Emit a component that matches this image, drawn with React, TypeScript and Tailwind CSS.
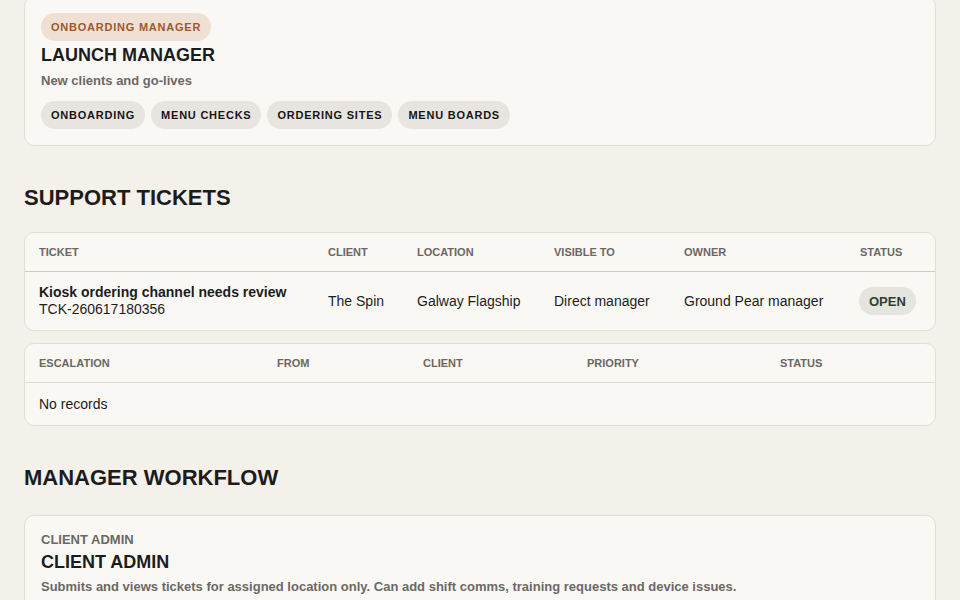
const chips = ["ONBOARDING", "MENU CHECKS", "ORDERING SITES", "MENU BOARDS"];

const ticketCols = ["TICKET", "CLIENT", "LOCATION", "VISIBLE TO", "OWNER", "STATUS"];
const escalationCols = ["ESCALATION", "FROM", "CLIENT", "PRIORITY", "STATUS"];

const Card = ({ children, className = "" }: { children: React.ReactNode; className?: string }) => (
  <div className={`rounded-[10px] border border-[#e2ded7] bg-[#faf8f5] ${className}`}>{children}</div>
);

const HeadCell = ({ label }: { label: string }) => (
  <div className="pl-[14px] text-[11px] font-bold uppercase leading-[14px] text-[#6b6762]">{label}</div>
);

export default function App() {
  return (
    <div className="min-h-screen bg-[#f4f0ea] px-6 pb-10 font-['Liberation_Sans',Arial,sans-serif] text-[#1c1c1c]">
      {/* role card, partly scrolled off the top */}
      <Card className="-mt-[4px] px-4 pb-4 pt-[16px]">
        <span className="inline-flex h-[28px] items-center rounded-full bg-[#f0e0d3] px-[10px] text-[11px] font-bold tracking-[0.07em] text-[#9a5a2f]">
          ONBOARDING MANAGER
        </span>
        <h3 className="mt-[3px] text-[18px] font-bold leading-[22px]">LAUNCH MANAGER</h3>
        <p className="mt-[7px] text-[13px] font-bold leading-[16px] text-[#6b6864]">New clients and go-lives</p>
        <div className="mt-[12px] flex gap-[6px]">
          {chips.map((c) => (
            <span
              key={c}
              className="inline-flex h-[28px] items-center rounded-full bg-[#e8e5e1] px-[10px] text-[11px] font-bold tracking-[0.07em] text-[#161616]"
            >
              {c}
            </span>
          ))}
        </div>
      </Card>

      <h2 className="mb-[21px] mt-[39px] text-[22px] font-bold leading-[26px]">SUPPORT TICKETS</h2>

      <Card>
        <div className="grid h-[39px] grid-cols-[289px_89px_137px_130px_176px_1fr] items-center border-b border-[#cdc9c3]">
          {ticketCols.map((c) => (
            <HeadCell key={c} label={c} />
          ))}
        </div>
        <div className="grid h-[58px] grid-cols-[289px_89px_137px_130px_176px_1fr] items-center text-[14px] leading-[17px]">
          <div className="pl-[14px]">
            <div className="font-bold">Kiosk ordering channel needs review</div>
            <div>TCK-260617180356</div>
          </div>
          <div className="pl-[14px]">The Spin</div>
          <div className="pl-[14px]">Galway Flagship</div>
          <div className="pl-[14px]">Direct manager</div>
          <div className="pl-[14px]">Ground Pear manager</div>
          <div className="pl-[13px]">
            <span className="inline-flex h-[28px] items-center rounded-full bg-[#e5e4dd] px-[10px] text-[13px] font-bold text-[#2f3e33]">
              OPEN
            </span>
          </div>
        </div>
      </Card>

      <Card className="mt-[12px]">
        <div className="grid h-[39px] grid-cols-[238px_146px_164px_193px_1fr] items-center border-b border-[#dcd8d2]">
          {escalationCols.map((c) => (
            <HeadCell key={c} label={c} />
          ))}
        </div>
        <div className="flex h-[42px] items-center pl-[14px] text-[14px]">No records</div>
      </Card>

      <h2 className="mb-[24px] mt-[39px] text-[22px] font-bold leading-[26px]">MANAGER WORKFLOW</h2>

      <Card className="px-4 pb-4 pt-[16px]">
        <div className="text-[13px] font-bold leading-[16px] text-[#6b6864]">CLIENT ADMIN</div>
        <h3 className="mt-[3px] text-[18px] font-bold leading-[22px]">CLIENT ADMIN</h3>
        <p className="mt-[6px] text-[13px] font-bold leading-[16px] text-[#6b6864]">
          Submits and views tickets for assigned location only. Can add shift comms, training requests and device issues.
        </p>
      </Card>
    </div>
  );
}
